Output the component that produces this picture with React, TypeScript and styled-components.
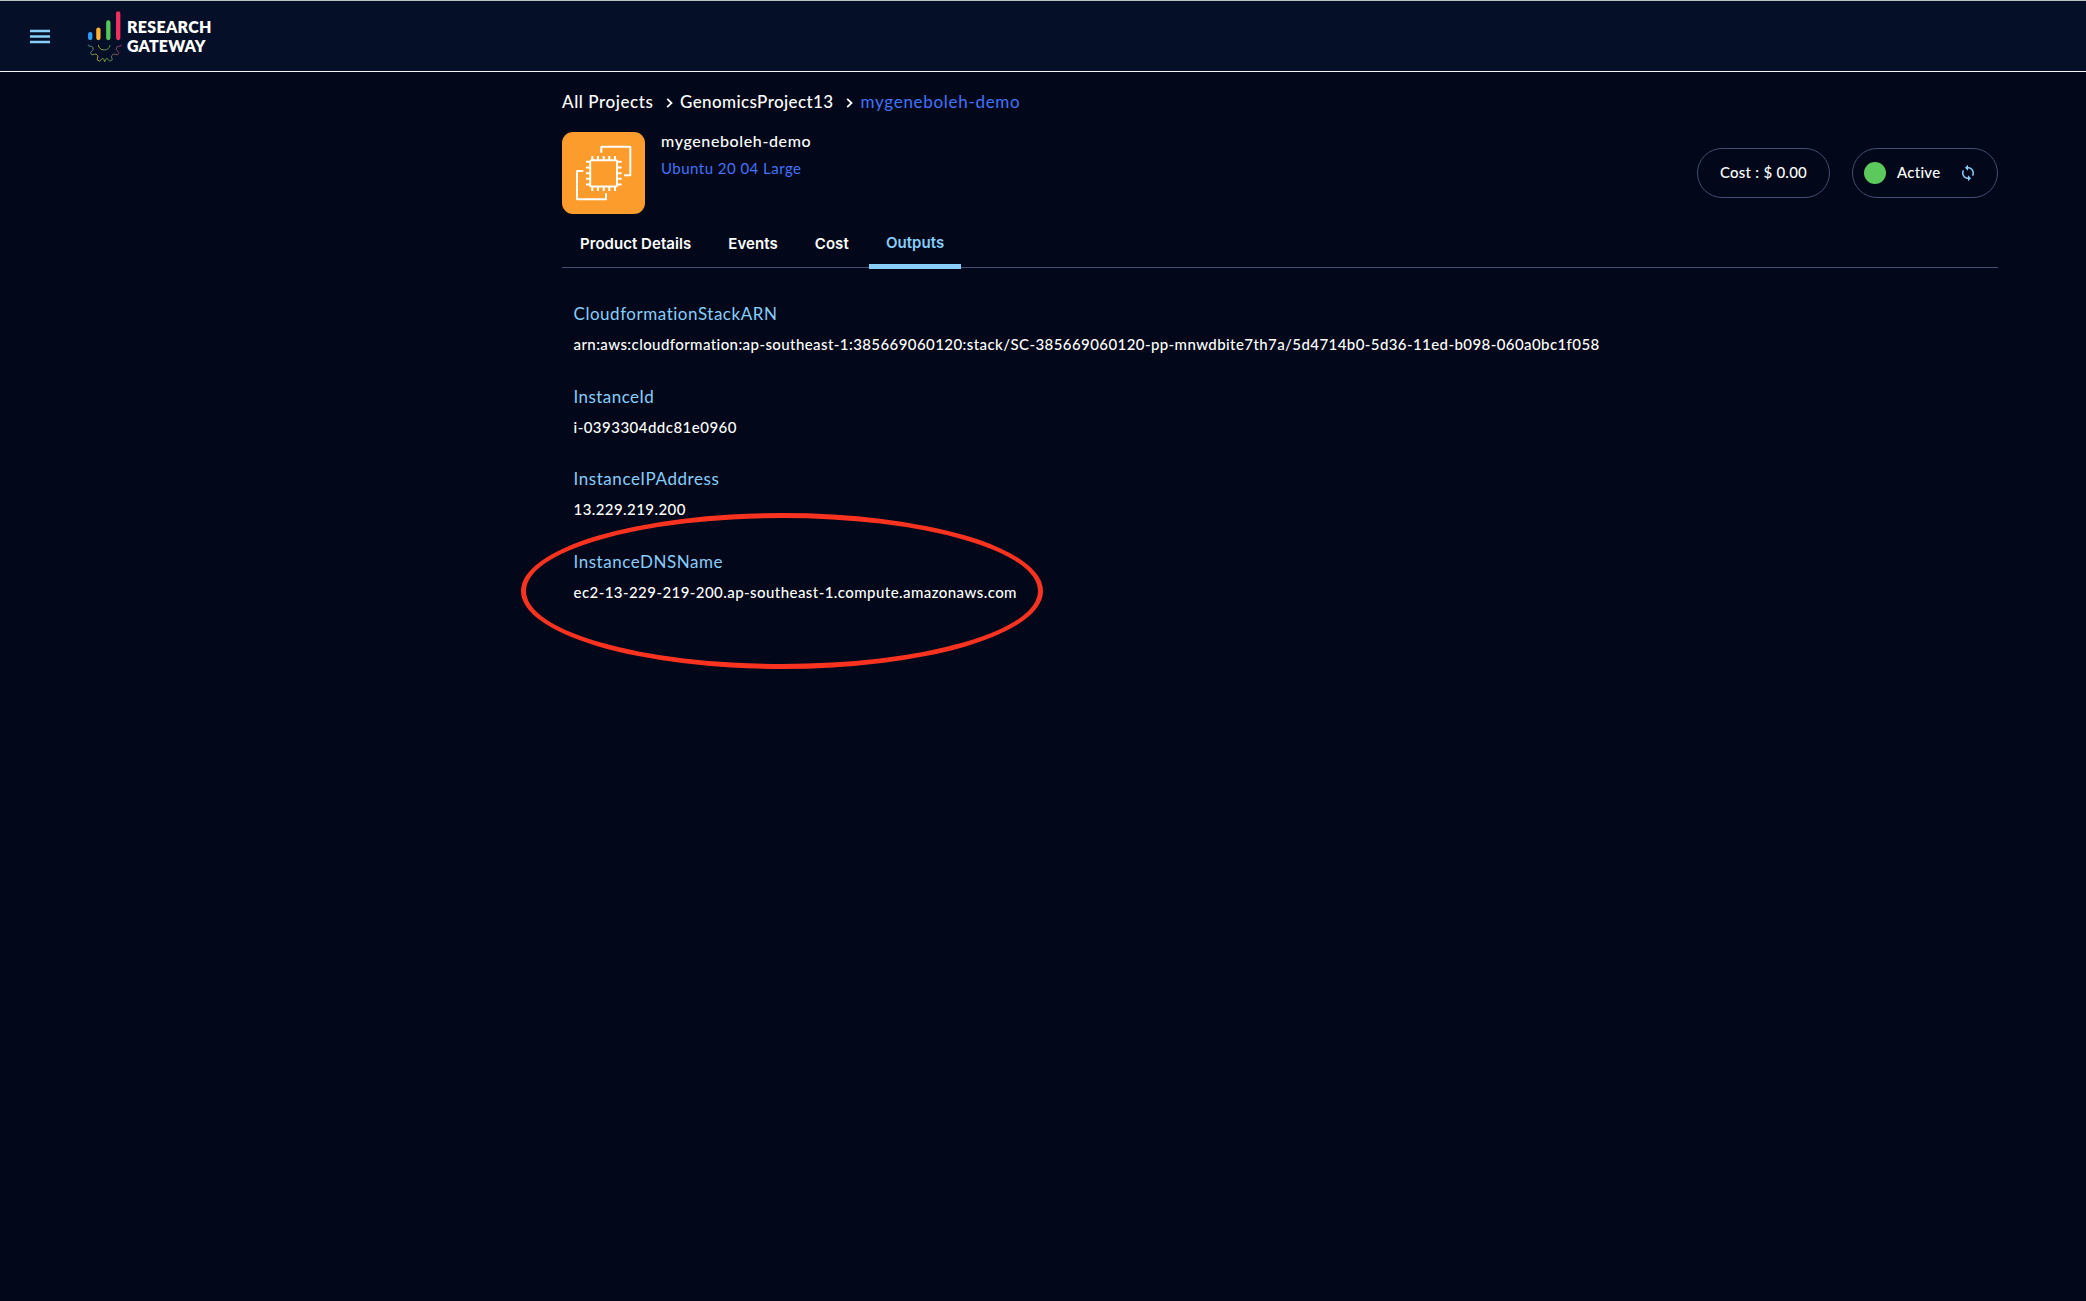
import React from "react";
import styled, { createGlobalStyle } from "styled-components";
import { MdSync } from "react-icons/md";

const color = {
  page: "#02081a",
  header: "#050f27",
  text: "#ffffff",
  accent: "#87cefa",
  link: "#4472fb",
  line: "#434e70",
  orange: "#fb9c2c",
  green: "#5bc95c",
  mark: "#fa3320",
};

const GlobalStyle = createGlobalStyle`
  *, *::before, *::after { box-sizing: border-box; }
  body {
    margin: 0;
    background: ${color.page};
    color: ${color.text};
    font-family: Lato, "Noto Sans", sans-serif;
    font-weight: 500;
  }
`;

const Page = styled.div`
  min-height: 1301px;
  display: flex;
  flex-direction: column;
`;

const Header = styled.header`
  height: 72px;
  display: flex;
  align-items: center;
  padding-left: 30px;
  background: ${color.header};
  border-top: 1px solid #b9c2c0;
  border-bottom: 1px solid #f4f5f7;
`;

const MenuIcon = styled.svg`
  width: 20px;
  height: 15px;
`;

const Logo = styled.div`
  display: flex;
  align-items: center;
  margin-left: 36px;
  gap: 5px;
`;

const LogoText = styled.div`
  display: flex;
  flex-direction: column;
  margin-top: -1px;
  font-size: 16px;
  line-height: 19px;
  font-weight: 800;
`;

const LogoLine = styled.span<{ $track: number }>`
  letter-spacing: ${(p) => p.$track}px;
`;

const Main = styled.main`
  width: 1436px;
  margin-left: 562px;
  padding-top: 18px;
  display: flex;
  flex-direction: column;
`;

const Breadcrumb = styled.nav`
  display: flex;
  align-items: center;
  height: 24px;
  font-size: 17px;
  line-height: 24px;
`;

const Crumb = styled.span<{ $track: number; $current?: boolean }>`
  letter-spacing: ${(p) => p.$track}px;
  color: ${(p) => (p.$current ? color.link : color.text)};
  font-weight: ${(p) => (p.$current ? 400 : 500)};
  white-space: nowrap;
`;

const Chevron = styled.svg<{ $left: number; $right: number }>`
  width: 7px;
  height: 10px;
  margin: 1px ${(p) => p.$right}px 0 ${(p) => p.$left}px;
`;

const Summary = styled.section`
  display: flex;
  align-items: center;
  height: 82px;
  margin-top: 18px;
`;

const ProductIcon = styled.svg`
  width: 83px;
  height: 82px;
  border-radius: 11px;
  background: ${color.orange};
`;

const Titles = styled.div`
  align-self: flex-start;
  display: flex;
  flex-direction: column;
  gap: 3px;
  margin: -3px auto 0 16px;
  line-height: 24px;
`;

const Name = styled.div`
  font-size: 16px;
  letter-spacing: 0.62px;
`;

const Kind = styled.div`
  font-size: 15px;
  font-weight: 400;
  letter-spacing: 0.47px;
  color: ${color.link};
`;

const Pill = styled.div<{ $width: number }>`
  display: flex;
  align-items: center;
  width: ${(p) => p.$width}px;
  height: 50px;
  border: 1px solid ${color.line};
  border-radius: 25px;
  font-size: 15px;
  letter-spacing: 0.26px;
`;

const PillText = styled.span`
  line-height: 20px;
  padding-bottom: 2px;
`;

const CostPill = styled(Pill)`
  justify-content: center;
  margin-right: 22px;
`;

const StatusPill = styled(Pill)`
  padding-left: 11px;
`;

const Dot = styled.span`
  width: 22px;
  height: 22px;
  margin-right: 11px;
  border-radius: 50%;
  background: ${color.green};
`;

const Refresh = styled(MdSync)`
  width: 18px;
  height: 18px;
  margin-left: 19px;
  color: ${color.accent};
`;

const Tabs = styled.div`
  display: flex;
  gap: 3.2px;
  height: 54px;
  padding-left: 1px;
  border-bottom: 1px solid ${color.line};
`;

const Tab = styled.div<{ $active?: boolean }>`
  height: 55px;
  padding: ${(p) => (p.$active ? 19 : 20)}px 17px 0;
  border-bottom: 5px solid ${(p) => (p.$active ? color.accent : "transparent")};
  color: ${(p) => (p.$active ? color.accent : color.text)};
  font: 600 15px/20px Inter, sans-serif;
  letter-spacing: 0.04px;
`;

const Outputs = styled.dl`
  display: flex;
  flex-direction: column;
  gap: 29px;
  margin: 34px 0 0;
  padding-left: 11.5px;
`;

const Output = styled.div`
  position: relative;
  height: 53.6px;
`;

const Label = styled.dt<{ $track: number }>`
  font-size: 17px;
  line-height: 24px;
  font-weight: 400;
  letter-spacing: ${(p) => p.$track}px;
  color: ${color.accent};
`;

const Value = styled.dd<{ $track: number }>`
  margin: 6px 0 0;
  font-size: 15px;
  line-height: 24px;
  letter-spacing: ${(p) => p.$track}px;
  white-space: nowrap;
`;

const Circle = styled.span`
  position: absolute;
  left: -53px;
  top: -37px;
  width: 522px;
  height: 156px;
  border: 5px solid ${color.mark};
  border-radius: 50%;
`;

const outputs = [
  {
    label: "CloudformationStackARN",
    labelTrack: 0.53,
    value:
      "arn:aws:cloudformation:ap-southeast-1:385669060120:stack/SC-385669060120-pp-mnwdbite7th7a/5d4714b0-5d36-11ed-b098-060a0bc1f058",
    valueTrack: 0.42,
  },
  { label: "InstanceId", labelTrack: 0.45, value: "i-0393304ddc81e0960", valueTrack: 0.48 },
  { label: "InstanceIPAddress", labelTrack: 0.57, value: "13.229.219.200", valueTrack: 0.43 },
  {
    label: "InstanceDNSName",
    labelTrack: 0.54,
    value: "ec2-13-229-219-200.ap-southeast-1.compute.amazonaws.com",
    valueTrack: 0.44,
    marked: true,
  },
];

const tabs = ["Product Details", "Events", "Cost", "Outputs"];

function LogoMark() {
  return (
    <svg width="36" height="54" viewBox="86 9 36 54" fill="none">
      <defs>
        <linearGradient id="gear" gradientUnits="userSpaceOnUse" x1="88" y1="0" x2="120.5" y2="0">
          <stop offset="0" stopColor="#2c7f8c" />
          <stop offset="0.28" stopColor="#b59a34" />
          <stop offset="0.62" stopColor="#4f9a4c" />
          <stop offset="1" stopColor="#a62a55" />
        </linearGradient>
      </defs>
      <g strokeWidth="4.3" strokeLinecap="round">
        <path d="M90.2 34.2V38" stroke="#2ba0fb" />
        <path d="M98.4 29.6V38" stroke="#fdb32f" />
        <path d="M108.3 22.4V38" stroke="#54c75a" />
        <path d="M118.2 13.4V38" stroke="#f2305f" />
      </g>
      <g stroke="url(#gear)" strokeWidth="1">
        <path d="M98.3 45a6 6 0 0 0 11.8 0" />
        <path
          d="M88.3 44.6v1.2q3.8.5 4.4 1.4l.5 2.2q-.2 1-2.7 3l1.4 2.5q3.3-1.1 4.2-.7l1.6 1.5q.5.9-.6 4.1l2.6 1.4q2-2.7 3-2.7l.6.2q.8.6 1.2 2.9h0.4q.4-2.3 1.2-2.9l.6-.2q1 0 3 2.7l2.6-1.4q-1.1-3.2-.6-4.1l1.6-1.5q.9-.4 4.2.7l1.4-2.500q-2.500-2-2.700-3l.5-2.200q.6-.9 4.400-1.400v-1.200"
          strokeLinejoin="round"
        />
      </g>
    </svg>
  );
}

function ComputeIcon() {
  const pins = [30.3, 36, 41.7, 47.3, 53];
  return (
    <ProductIcon viewBox="0 0 83 82" fill="none" stroke="#fff" strokeWidth="2">
      <path d="M39.3 20.7V14.7H68.3V43.3H62" strokeLinejoin="round" />
      <path d="M21.3 39H15V67.3H44V61.3" strokeLinejoin="round" />
      <rect x="28.2" y="28.2" width="26.8" height="26.4" rx="1.5" />
      {pins.map((p) => (
        <path
          key={p}
          d={`M${p} 24V28M${p} 55V59M24 ${p - 0.5}H28M55.4 ${p - 0.5}H59.6`}
        />
      ))}
    </ProductIcon>
  );
}

function Separator({ left, right }: { left: number; right: number }) {
  return (
    <Chevron $left={left} $right={right} viewBox="0 0 7 10" fill="none" stroke="#fff" strokeWidth="1.8">
      <path d="M1.2 0.8L5.5 5L1.2 9.2" />
    </Chevron>
  );
}

export default function App() {
  return (
    <Page>
      <GlobalStyle />
      <Header>
        <MenuIcon viewBox="0 0 20 15" stroke={color.accent} strokeWidth="2.5">
          <path d="M0 2H20M0 7.500H20M0 13H20" />
        </MenuIcon>
        <Logo>
          <LogoMark />
          <LogoText>
            <LogoLine $track={0.3}>RESEARCH</LogoLine>
            <LogoLine $track={0.15}>GATEWAY</LogoLine>
          </LogoText>
        </Logo>
      </Header>
      <Main>
        <Breadcrumb>
          <Crumb $track={0.58}>All Projects</Crumb>
          <Separator left={12.5} right={7} />
          <Crumb $track={0.4}>GenomicsProject13</Crumb>
          <Separator left={12.5} right={7.5} />
          <Crumb $track={0.7} $current>
            mygeneboleh-demo
          </Crumb>
        </Breadcrumb>
        <Summary>
          <ComputeIcon />
          <Titles>
            <Name>mygeneboleh-demo</Name>
            <Kind>Ubuntu 20 04 Large</Kind>
          </Titles>
          <CostPill $width={133}>
            <PillText>Cost : $ 0.00</PillText>
          </CostPill>
          <StatusPill $width={146}>
            <Dot />
            <PillText>Active</PillText>
            <Refresh />
          </StatusPill>
        </Summary>
        <Tabs>
          {tabs.map((t) => (
            <Tab key={t} $active={t === "Outputs"}>
              {t}
            </Tab>
          ))}
        </Tabs>
        <Outputs>
          {outputs.map((o) => (
            <Output key={o.label}>
              <Label $track={o.labelTrack}>{o.label}</Label>
              <Value $track={o.valueTrack}>{o.value}</Value>
              {o.marked && <Circle />}
            </Output>
          ))}
        </Outputs>
      </Main>
    </Page>
  );
}
